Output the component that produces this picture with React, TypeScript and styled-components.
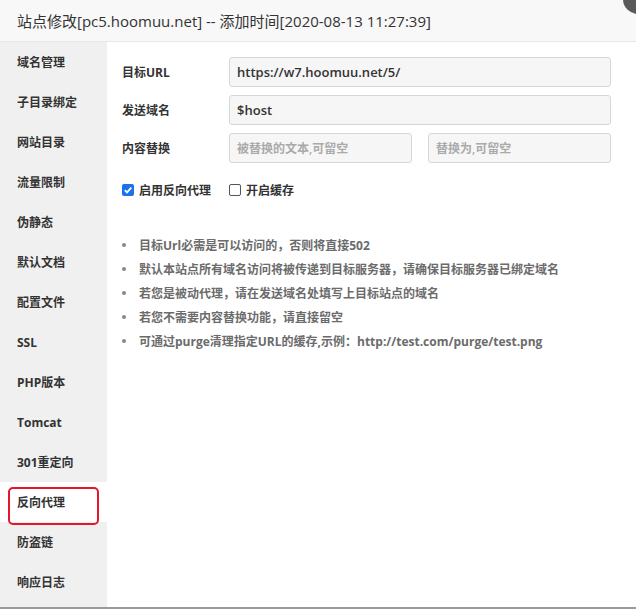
import React from "react";
import styled, { createGlobalStyle } from "styled-components";

const GlobalStyle = createGlobalStyle`
  html, body {
    margin: 0;
    padding: 0;
    width: 636px;
    height: 609px;
    overflow: hidden;
    background: #fff;
    font-family: "Open Sans", "Noto Sans CJK SC", sans-serif;
  }
`;

const menu = [
  "域名管理",
  "子目录绑定",
  "网站目录",
  "流量限制",
  "伪静态",
  "默认文档",
  "配置文件",
  "SSL",
  "PHP版本",
  "Tomcat",
  "301重定向",
  "反向代理",
  "防盗链",
  "响应日志",
];

const tips = [
  "目标Url必需是可以访问的，否则将直接502",
  "默认本站点所有域名访问将被传递到目标服务器，请确保目标服务器已绑定域名",
  "若您是被动代理，请在发送域名处填写上目标站点的域名",
  "若您不需要内容替换功能，请直接留空",
  "可通过purge清理指定URL的缓存,示例：http://test.com/purge/test.png",
];

const Layer = styled.div`
  position: relative;
  width: 636px;
  height: 609px;
  display: flex;
  flex-direction: column;
  overflow: hidden;
`;

const Header = styled.div`
  height: 41px;
  flex-shrink: 0;
  display: flex;
  align-items: center;
  padding-left: 17px;
  background: #f8f8f8;
  border-bottom: 1px solid #e9e9e9;
  font-size: 15px;
  color: #333;
`;

const CloseBtn = styled.div`
  position: absolute;
  top: -16px;
  right: -17px;
  width: 30px;
  height: 30px;
  border-radius: 50%;
  background: #5a5a5a;
`;

const Body = styled.div`
  flex: 1;
  display: flex;
  min-height: 0;
`;

const Sidebar = styled.div`
  width: 107px;
  flex-shrink: 0;
  background: #f0f0f0;
  display: flex;
  flex-direction: column;
`;

const MenuItem = styled.div<{ $active?: boolean }>`
  position: relative;
  height: 40px;
  flex-shrink: 0;
  display: flex;
  align-items: center;
  padding-left: 17px;
  font-size: 12px;
  font-weight: 700;
  color: #333;
  background: ${(p) => (p.$active ? "#fff" : "transparent")};
`;

const Highlight = styled.span`
  position: absolute;
  left: 8px;
  top: 5px;
  width: 87px;
  height: 34px;
  border: 2px solid #e5162c;
  border-radius: 5px;
`;

const Content = styled.div`
  flex: 1;
  padding: 15px 25px 0 15px;
`;

const Row = styled.div`
  display: flex;
  align-items: center;
  height: 30px;
  margin-bottom: 8px;
`;

const Label = styled.div`
  width: 107px;
  flex-shrink: 0;
  font-size: 12px;
  font-weight: 700;
  color: #333;
`;

const Inputs = styled.div`
  flex: 1;
  display: flex;
  gap: 16px;
`;

const Input = styled.input`
  flex: 1;
  min-width: 0;
  height: 30px;
  box-sizing: border-box;
  border: 1px solid #d6d6d6;
  border-radius: 3px;
  background: #f6f6f6;
  padding: 0 7px;
  font-family: "Open Sans", "Noto Sans CJK SC", sans-serif;
  font-size: 13px;
  font-weight: 600;
  color: #333;
  outline: none;
  &::placeholder {
    color: #aaa;
    font-size: 12px;
    font-weight: 600;
  }
`;

const Checks = styled.div`
  display: flex;
  align-items: center;
  gap: 18px;
  margin-top: 18px;
`;

const Check = styled.label`
  display: flex;
  align-items: center;
  gap: 5px;
  font-size: 12px;
  font-weight: 700;
  color: #333;
`;

const Box = styled.span<{ $on?: boolean }>`
  width: 12px;
  height: 12px;
  box-sizing: border-box;
  border-radius: 2px;
  border: ${(p) => (p.$on ? "none" : "1px solid #555")};
  background: ${(p) => (p.$on ? "#1a73e8" : "#fff")};
  display: flex;
  align-items: center;
  justify-content: center;
`;

const Tips = styled.ul`
  list-style: none;
  margin: 38px 0 0;
  padding: 0;
  display: flex;
  flex-direction: column;
  gap: 8px;
`;

const Tip = styled.li`
  display: flex;
  align-items: center;
  height: 16px;
  font-size: 12px;
  font-weight: 700;
  color: #6b6b6b;
  &::before {
    content: "";
    width: 4px;
    height: 4px;
    border-radius: 50%;
    background: #888;
    margin: 0 13px 0 0;
  }
`;

const BottomBar = styled.div`
  height: 2px;
  flex-shrink: 0;
  background: #9a9a9a;
`;

export default function App() {
  return (
    <>
      <GlobalStyle />
      <Layer>
        <Header>站点修改[pc5.hoomuu.net] -- 添加时间[2020-08-13 11:27:39]</Header>
        <CloseBtn />
        <Body>
          <Sidebar>
            {menu.map((m) => (
              <MenuItem key={m} $active={m === "反向代理"}>
                {m === "反向代理" && <Highlight />}
                {m}
              </MenuItem>
            ))}
          </Sidebar>
          <Content>
            <Row>
              <Label>目标URL</Label>
              <Inputs>
                <Input defaultValue="https://w7.hoomuu.net/5/" />
              </Inputs>
            </Row>
            <Row>
              <Label>发送域名</Label>
              <Inputs>
                <Input defaultValue="$host" />
              </Inputs>
            </Row>
            <Row>
              <Label>内容替换</Label>
              <Inputs>
                <Input placeholder="被替换的文本,可留空" />
                <Input placeholder="替换为,可留空" />
              </Inputs>
            </Row>
            <Checks>
              <Check>
                <Box $on>
                  <svg width="10" height="10" viewBox="0 0 10 10">
                    <path d="M1.8 5.2 L4 7.4 L8.3 2.6" fill="none" stroke="#fff" strokeWidth="1.8" />
                  </svg>
                </Box>
                启用反向代理
              </Check>
              <Check>
                <Box />
                开启缓存
              </Check>
            </Checks>
            <Tips>
              {tips.map((t) => (
                <Tip key={t}>{t}</Tip>
              ))}
            </Tips>
          </Content>
        </Body>
        <BottomBar />
      </Layer>
    </>
  );
}
